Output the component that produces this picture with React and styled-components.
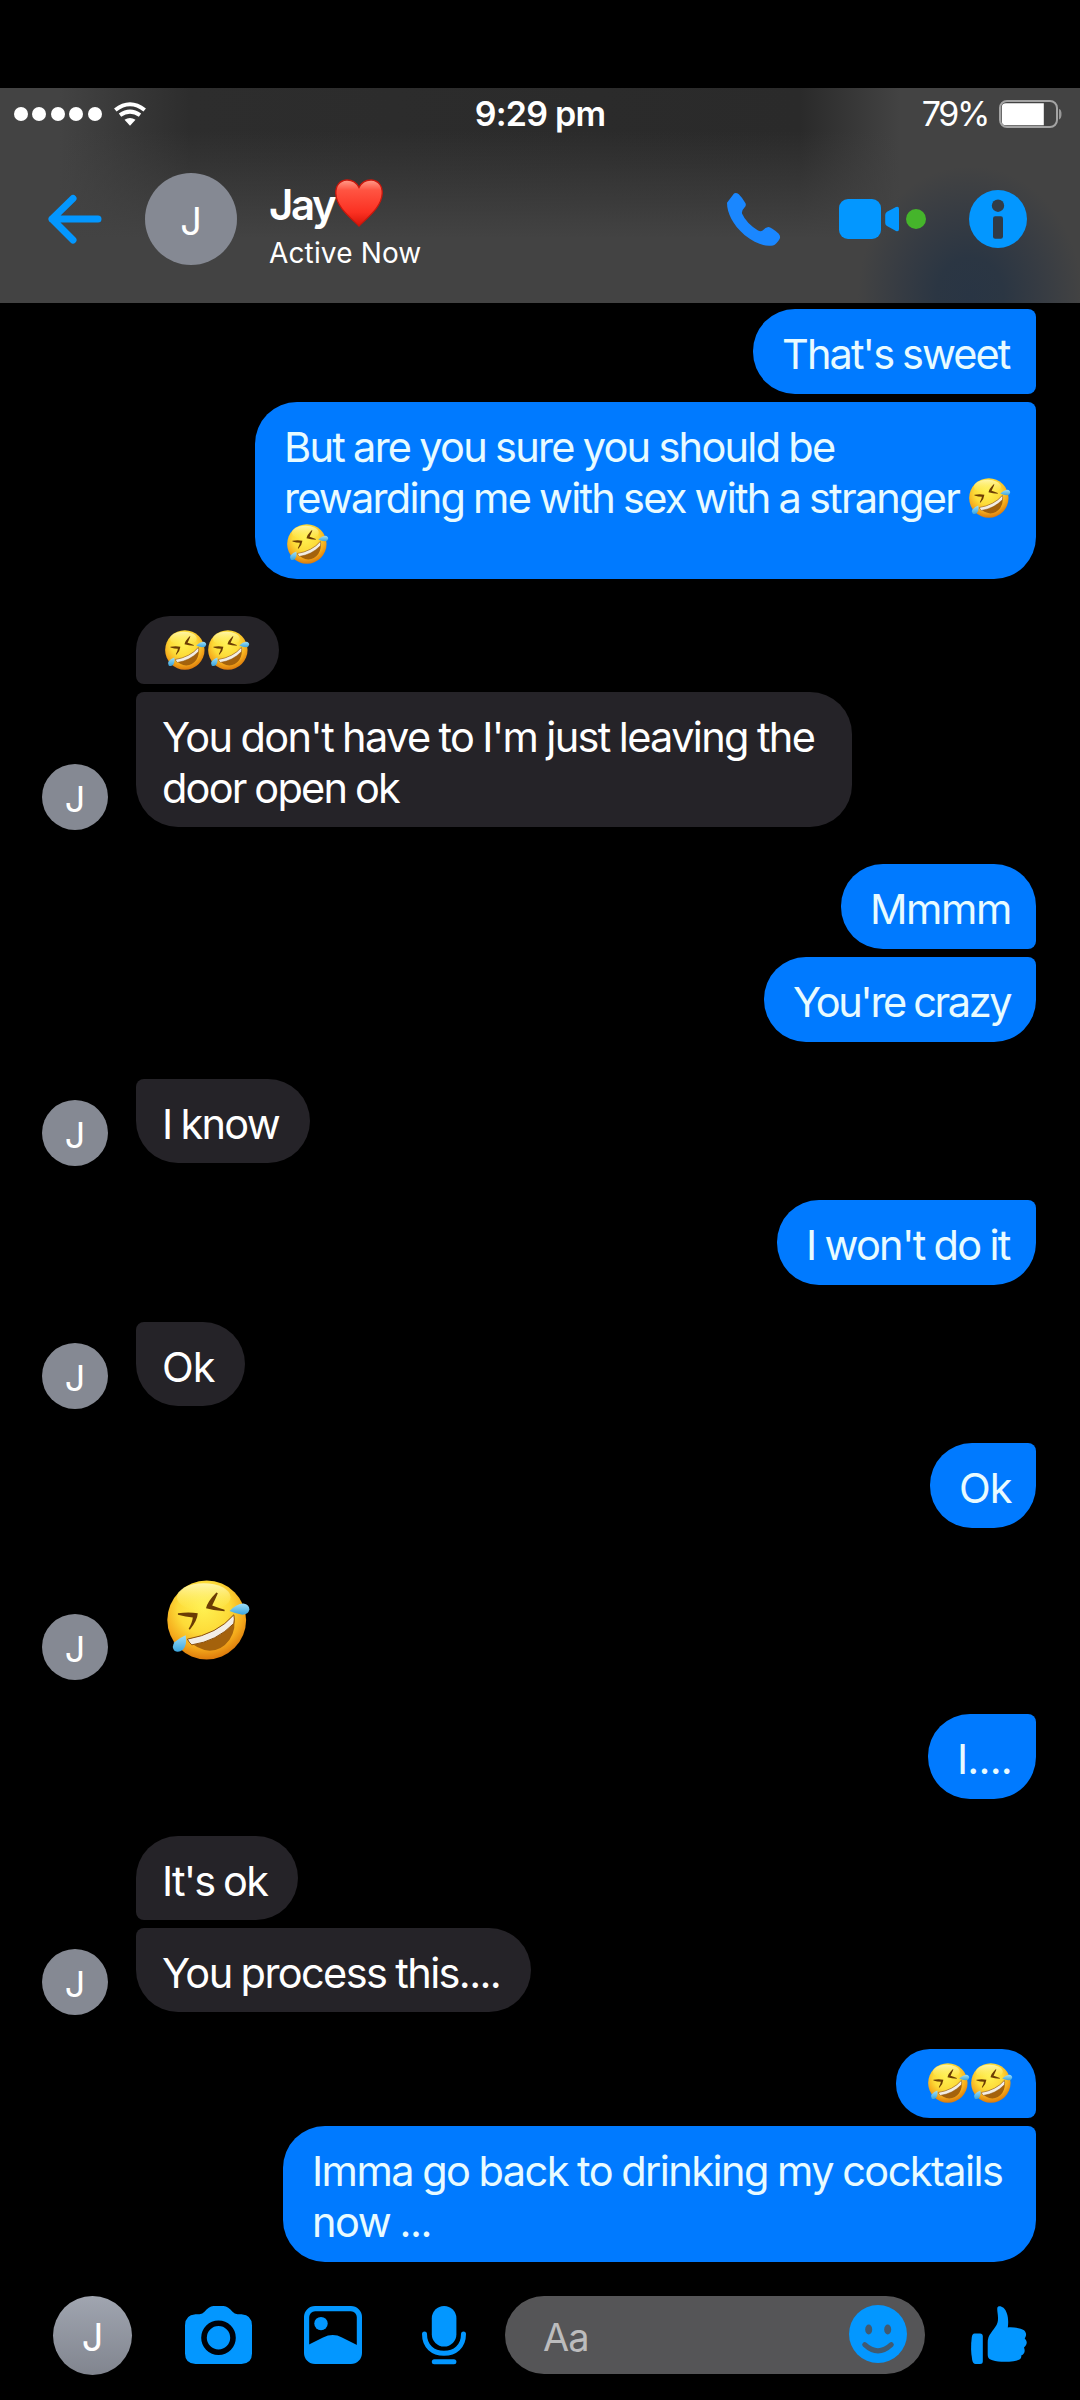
import React from "react";
import styled, { createGlobalStyle } from "styled-components";

const GlobalStyle = createGlobalStyle`
  * {
    box-sizing: border-box;
  }

  body {
    margin: 0;
    background-color: #000000;
    font-family: Inter, "Liberation Sans", sans-serif;
    color: #ffffff;
  }

  svg {
    display: block;
    flex: none;
    overflow: visible;
  }
`;

const Screen = styled.div`
  display: flex;
  flex-direction: column;
  width: 1080px;
  height: 2400px;
  padding-top: 88px;
  background-color: #000000;
  overflow: hidden;
`;

// header
const Header = styled.header`
  flex: none;
  height: 215px;
  background:
    radial-gradient(ellipse 112px 130px at 970px 208px, #293544 0%, #2b3643 30%, rgba(48, 56, 67, 0.72) 60%, rgba(67, 67, 67, 0) 100%),
    linear-gradient(to bottom, rgba(67, 67, 67, 0) 20%, #434343 70%),
    linear-gradient(to right, #434343 60px, #2d2d2d 190px, #2a2a2a 800px, #434343 900px);
`;

const StatusBar = styled.div`
  display: grid;
  grid-template-columns: 1fr auto 1fr;
  align-items: center;
  height: 51px;
  padding: 0 18px 0 14px;
`;

const Signal = styled.div`
  display: flex;
  align-items: center;
  gap: 4.4px;

  svg {
    margin-left: 8.5px;
  }
`;

const SignalDot = styled.span`
  width: 14px;
  height: 14px;
  border-radius: 50%;
  background-color: #ffffff;
`;

const Clock = styled.span`
  padding-left: 4px;
  font-size: 34px;
  font-weight: 600;
  letter-spacing: -0.75px;
  line-height: 50px;
`;

const Power = styled.div`
  display: flex;
  align-items: center;
  justify-content: flex-end;
  gap: 11px;
  font-size: 34px;
  letter-spacing: -2.4px;
  line-height: 50px;
`;

const ContactBar = styled.div`
  display: flex;
  align-items: center;
  height: 160px;
  padding: 0 53px 0 48px;
`;

const Avatar = styled.div`
  display: flex;
  flex: none;
  align-items: center;
  justify-content: center;
  width: ${({ $size }) => $size}px;
  height: ${({ $size }) => $size}px;
  padding-top: 3px;
  border-radius: 50%;
  background: ${({ $shaded }) =>
    $shaded ? "linear-gradient(#a0a5b0, #81858f)" : "#858993"};
  font-size: ${({ $font }) => $font}px;
  line-height: 1;
`;

const ContactAvatar = styled(Avatar)`
  margin-left: 43px;
`;

const ContactInfo = styled.div`
  display: flex;
  flex: 1;
  flex-direction: column;
  margin-left: 32px;
  padding-top: 13px;
`;

const ContactName = styled.div`
  display: flex;
  align-items: center;
  height: 50px;
  font-size: 42px;
  font-weight: 600;
  letter-spacing: -2.4px;
  line-height: 50px;

  svg {
    margin: -4px 0 0 1px;
  }
`;

const ContactStatus = styled.div`
  margin-top: 5px;
  font-size: 28px;
  letter-spacing: 0.15px;
  line-height: 36px;
`;

const HeaderActions = styled.div`
  display: flex;
  align-items: center;
`;

const VideoCall = styled.div`
  display: flex;
  align-items: center;
  gap: 7px;
  margin: 0 43px 0 59px;
`;

const OnlineDot = styled.span`
  width: 20px;
  height: 20px;
  border-radius: 50%;
  background-color: #45b52b;
`;

// messages
const Messages = styled.main`
  display: flex;
  flex: none;
  flex-direction: column;
  gap: 37px;
  height: 1959px;
  padding: 6px 44px 0 42px;
`;

const Group = styled.div`
  display: flex;
  align-items: flex-end;
  justify-content: ${({ $sent }) => ($sent ? "flex-end" : "flex-start")};
  gap: 28px;
`;

const GroupAvatar = styled(Avatar)`
  margin-bottom: -3px;
`;

const Bubbles = styled.div`
  display: flex;
  flex-direction: column;
  align-items: ${({ $sent }) => ($sent ? "flex-end" : "flex-start")};
  gap: 8px;
`;

const Bubble = styled.div`
  width: ${({ $width }) => $width}px;
  height: ${({ $height }) => $height}px;
  padding: ${({ $top }) => $top}px 0 0 ${({ $sent }) => ($sent ? 29 : 26)}px;
  border-radius: ${({ $corners }) => $corners};
  background-color: ${({ $sent }) => ($sent ? "#007aff" : "#252328")};
  color: ${({ $sent }) => ($sent ? "#e8fbff" : "#ffffff")};
`;

const Line = styled.div`
  display: flex;
  align-items: center;
  height: 50.8px;
  font-size: 41.5px;
  letter-spacing: ${({ $track }) => $track}px;
  word-spacing: -1px;
  line-height: 50.8px;
  white-space: pre;

  svg {
    margin-left: 1px;
  }
`;

const EmojiLine = styled.div`
  display: flex;
  gap: 2px;
  padding-left: 3px;
`;

const BigEmoji = styled.div`
  height: 112px;
  padding: 15px 0 0 31px;
`;

// composer
const Composer = styled.footer`
  display: flex;
  align-items: center;
  height: 138px;
  padding: 8px 53px 0;
`;

const ComposerIcons = styled.div`
  display: flex;
  gap: 52px;
  margin-left: 53px;

  svg:last-child {
    margin-left: 8px;
  }
`;

const Input = styled.div`
  display: flex;
  align-items: center;
  justify-content: space-between;
  width: 420px;
  height: 78px;
  margin: 0 46px 0 39px;
  padding: 0 18px 3px 38px;
  border-radius: 39px;
  background-color: #555557;
`;

const Placeholder = styled.span`
  padding-top: 7px;
  color: #bcbcbd;
  font-size: 38px;
  letter-spacing: -1px;
  line-height: 46px;
`;

const BLUE = "#0397ff";

const WifiIcon = () => (
  <svg width="32" height="24" viewBox="0 0 32 24" fill="none" stroke="#fff" strokeWidth="4">
    <path d="M1.3 8Q16-3.6 30.7 8" />
    <path d="M6 13.2Q16 6 26 13.2" />
    <path d="M10.5 17.8Q16 14 21.5 17.8L16 23.8Z" fill="#fff" stroke="none" />
  </svg>
);

const BatteryIcon = () => (
  <svg width="63" height="28" viewBox="0 0 63 28">
    <rect x="1" y="1" width="57" height="26" rx="7" fill="none" stroke="#a4a4a4" strokeWidth="2" />
    <path d="M7 3.2H44.8V25.2H7Q2.8 25.2 2.8 21V7.4Q2.8 3.2 7 3.2Z" fill="#fff" />
    <path d="M60 9Q62.5 9.5 62.5 14T60 19.5Z" fill="#989898" />
  </svg>
);

const BackIcon = () => (
  <svg width="54" height="48" viewBox="0 0 54 48" fill="none" stroke={BLUE} strokeWidth="7" strokeLinecap="round" strokeLinejoin="round">
    <path d="M25 3.5 4 24 25 45M4 24H50" />
  </svg>
);

const PhoneIcon = () => (
  <svg width="53" height="53" viewBox="0 0 53 53" fill="#1a87ff">
    <path d="M7 .4Q9.4-.5 11.8 1.3 15.8 5.3 18.5 10.2 19.5 12.5 17.5 14.5 14.5 17.5 15 20.4 19.2 30 31 37.4 33.5 38.8 35.6 37.6 38.5 34.4 41.3 34 44 33.8 51.5 40.6 54 43.2 52.6 46 49.5 51.5 46 52.4C38 54 28.5 50.5 17.5 42 6 32 0 20 0 9.8 1 4 7 .4Z" />
  </svg>
);

const VideoIcon = () => (
  <svg width="60" height="40" viewBox="0 0 60 40" fill={BLUE}>
    <rect width="42" height="40" rx="9" />
    <path d="M46.2 16Q46.2 14 48 12.8L57 8Q60 7 60 10V30Q60 33 57 32L48 27Q46.2 26 46.2 24Z" />
  </svg>
);

const InfoIcon = () => (
  <svg width="58" height="58" viewBox="0 0 58 58">
    <circle cx="29" cy="29" r="29" fill={BLUE} />
    <circle cx="29" cy="15.7" r="6.2" fill="#323c47" />
    <rect x="24" y="26.3" width="10" height="22.4" rx="2.2" fill="#303a45" />
  </svg>
);

const CameraIcon = () => (
  <svg width="67" height="58" viewBox="0 0 67 58">
    <path d="M10.5 8.3H14.5Q17.5 8.2 19.5 5.8 23.5 .5 28.5 0H38.5Q43.5 .5 47.5 5.8 49.5 8.2 52.5 8.3H56.5Q67 9 67 19.5V47.5Q67 57.5 56.5 58H10.5Q0 57.5 0 47.5V19.5Q0 9 10.5 8.3Z" fill={BLUE} />
    <circle cx="33.5" cy="31.7" r="14.5" fill={BLUE} stroke="#000208" strokeWidth="5.6" />
  </svg>
);

const GalleryIcon = () => (
  <svg width="58" height="58" viewBox="0 0 58 58">
    <rect x="2.6" y="2.6" width="52.8" height="52.8" rx="8.5" fill="none" stroke={BLUE} strokeWidth="5.2" />
    <path d="M4 39 19 31.4Q29 26.5 38 31.4L54 39.5V48Q54 55 47 55H11Q4 55 4 48Z" fill={BLUE} />
    <circle cx="17" cy="17.6" r="6.7" fill={BLUE} />
  </svg>
);

const MicIcon = () => (
  <svg width="44" height="58" viewBox="0 0 44 58">
    <rect x="9.8" width="24.6" height="40.5" rx="12.3" fill={BLUE} />
    <path d="M2.5 28C2.5 40.5 11 47.3 22 47.3S41.5 40.5 41.5 28" fill="none" stroke={BLUE} strokeWidth="5" strokeLinecap="round" />
    <rect x="9.8" y="53.2" width="24.6" height="5" rx="2.5" fill={BLUE} />
  </svg>
);

const SmileIcon = () => (
  <svg width="58" height="58" viewBox="0 0 58 58">
    <circle cx="29" cy="29" r="29" fill={BLUE} />
    <ellipse cx="19.7" cy="24.5" rx="3.5" ry="5" fill="#425a70" />
    <ellipse cx="38.7" cy="24.5" rx="3.5" ry="5" fill="#425a70" />
    <path d="M15.7 39.6Q29 52 42.3 39.6" fill="none" stroke="#425a70" strokeWidth="5" strokeLinecap="round" />
  </svg>
);

const LikeIcon = () => (
  <svg width="56" height="58" viewBox="0 0 56 58" fill={BLUE}>
    <path d="M3.5 27.6H9Q11.8 27.6 11.8 30.5V55.5Q11.8 58 9 58H4.5Q2 58 1.2 54-.8 43 .8 31 1.3 27.8 3.5 27.6Z" />
    <path d="M26.3 2C26.5-.5 30-.3 32.5 1.7 36.5 5.5 38 13 36.8 21.4 43 21 50 22 53 24.2 56 27 55.3 30 53.7 32.5 56.5 35 56.5 38.5 53 41.5 54.5 45.5 53.5 48 50.2 49.5 51 53 48 54.5 42.5 55.2 35.5 56 27 56 21.5 54.2 17.5 53 16.7 51.5 16.7 48V36.5Q16.7 30.5 20 27C24.5 20.5 27.3 18.5 27 11.5 26.9 7.5 26 5 26.3 2Z" />
  </svg>
);

const HeartEmoji = () => (
  <svg width="48" height="48" viewBox="0 0 48 48">
    <defs>
      <linearGradient id="heart" x1="0" y1="0" x2="0" y2="1">
        <stop offset="0" stopColor="#ff9d8b" />
        <stop offset="0.22" stopColor="#ff5442" />
        <stop offset="0.7" stopColor="#fb3122" />
        <stop offset="1" stopColor="#d81408" />
      </linearGradient>
    </defs>
    <path d="M24 8.5C27 2.5 32 .8 36.5 1 43.5 1.5 47.5 7 47.2 14.5 46.7 27 35.5 36 24 47 12.5 36 1.3 27 .8 14.5 .5 7 4.5 1.5 11.5 1 16 .8 21 2.5 24 8.5Z" fill="url(#heart)" stroke="#c9170c" strokeWidth="1.3" />
  </svg>
);

// 🤣 drawn on an 83x80 grid
const RoflEmoji = ({ size = 40 }) => (
  <svg width={size * 1.03} height={size} viewBox="0 0 83 80">
    <defs>
      <radialGradient id="face" cx="0.46" cy="0.34" r="0.68">
        <stop offset="0" stopColor="#fff152" />
        <stop offset="0.48" stopColor="#fddb38" />
        <stop offset="0.76" stopColor="#f5ab1c" />
        <stop offset="1" stopColor="#d9740a" />
      </radialGradient>
      <linearGradient id="shine" x1="0" y1="0" x2="0" y2="1">
        <stop offset="0" stopColor="#fff9b8" stopOpacity="0.9" />
        <stop offset="1" stopColor="#fff25a" stopOpacity="0" />
      </linearGradient>
      <linearGradient id="tear" x1="0" y1="0" x2="0" y2="1">
        <stop offset="0" stopColor="#9fdff8" />
        <stop offset="1" stopColor="#3ba5dd" />
      </linearGradient>
    </defs>
    <circle cx="40" cy="40" r="39.7" fill="url(#face)" />
    <ellipse cx="37" cy="17" rx="27" ry="14" fill="url(#shine)" />
    <path d="M11 33.3Q22 31.6 31 33.3 30.5 41 23 49.8L21.8 48.8Q25.5 42.5 26 37.5 19 37 11 34.8Z" fill="#6b3c04" />
    <path d="M49.8 12.2 51.2 13Q48.5 19.5 45.5 25.3 51 27.3 58 29.8V31.2Q48 30.8 39.3 28.2 40.5 21.5 49.8 12.2Z" fill="#6b3c04" />
    <path d="M20.5 59.5Q51 54 67 35 70.5 48 63 60 55 71 43 71 30 70 20.5 59.5Z" fill="#a4620c" />
    <path d="M20.5 59.3Q51 54 67.3 34.8 68.4 39 67.3 43.5 50 61.5 25 65 22 62.5 20.5 59.3Z" fill="#f3eee6" stroke="#8a4f0a" strokeWidth="1" />
    <path d="M63 31Q70 23.5 77 23.3 83 24 83 29.5 82 34.5 76 34.7 70 34 63 31Z" fill="url(#tear)" />
    <path d="M18.8 55.3Q20.5 65 16 70 11.5 73.5 7.5 71 4.3 67 7.5 62.5 12 58 18.8 55.3Z" fill="url(#tear)" />
  </svg>
);

// corners: top-left top-right bottom-right bottom-left
// tracks: letter spacing of each line
const CONVERSATION = [
  {
    sent: true,
    bubbles: [
      {
        width: 283,
        height: 85,
        corners: "42px 8px 8px 42px",
        lines: ["That's sweet"],
        tracks: [-1.9],
      },
      {
        width: 781,
        height: 177,
        corners: "42px 8px 42px 42px",
        lines: ["But are you sure you should be", "rewarding me with sex with a stranger "],
        tracks: [-1.72, -1.76],
        inlineEmoji: true,
        emojis: 1,
      },
    ],
  },
  {
    bubbles: [
      { width: 143, height: 68, corners: "34px 34px 34px 8px", lines: [], emojis: 2 },
      {
        width: 716,
        height: 135,
        corners: "8px 42px 42px 42px",
        lines: ["You don't have to I'm just leaving the", "door open ok"],
        tracks: [-1.65, -1.82],
      },
    ],
  },
  {
    sent: true,
    bubbles: [
      {
        width: 195,
        height: 85,
        corners: "42px 42px 8px 42px",
        lines: ["Mmmm"],
        tracks: [-1.4],
      },
      {
        width: 272,
        height: 85,
        corners: "42px 8px 42px 42px",
        lines: ["You're crazy"],
        tracks: [-2.35],
      },
    ],
  },
  {
    bubbles: [
      {
        width: 174,
        height: 84,
        corners: "8px 42px 42px 42px",
        lines: ["I know"],
        tracks: [-1.7],
      },
    ],
  },
  {
    sent: true,
    bubbles: [
      {
        width: 259,
        height: 85,
        corners: "42px 8px 42px 42px",
        lines: ["I won't do it"],
        tracks: [-1.7],
      },
    ],
  },
  {
    bubbles: [
      {
        width: 109,
        height: 84,
        corners: "8px 42px 42px 42px",
        lines: ["Ok"],
        tracks: [-1.1],
      },
    ],
  },
  {
    sent: true,
    bubbles: [
      {
        width: 106,
        height: 85,
        corners: "42px 8px 42px 42px",
        lines: ["Ok"],
        tracks: [-1.1],
      },
    ],
  },
  { bigEmoji: true, bubbles: [] },
  {
    sent: true,
    bubbles: [
      {
        width: 108,
        height: 85,
        corners: "42px 8px 42px 42px",
        lines: ["I...."],
        tracks: [-0.8],
      },
    ],
  },
  {
    bubbles: [
      {
        width: 162,
        height: 84,
        corners: "42px 42px 42px 8px",
        lines: ["It's ok"],
        tracks: [-1.85],
      },
      {
        width: 395,
        height: 84,
        corners: "8px 42px 42px 42px",
        lines: ["You process this...."],
        tracks: [-1.62],
      },
    ],
  },
  {
    sent: true,
    bubbles: [
      { width: 140, height: 69, corners: "34px 34px 8px 34px", lines: [], emojis: 2 },
      {
        width: 753,
        height: 136,
        corners: "42px 8px 42px 42px",
        lines: ["Imma go back to drinking my cocktails", "now ..."],
        tracks: [-1.54, -1.45],
      },
    ],
  },
];

function Message({ sent, message }) {
  const { width, height, corners, lines, tracks, emojis = 0, inlineEmoji } = message;
  const last = lines.length - 1;

  return (
    <Bubble
      $sent={sent}
      $width={width}
      $height={height}
      $corners={corners}
      $top={lines.length ? 20.3 : 14}
    >
      {lines.map((line, index) => (
        <Line key={line} $track={tracks[index]}>
          {line}
          {inlineEmoji && index === last && <RoflEmoji />}
        </Line>
      ))}
      {emojis > 0 && (
        <EmojiLine>
          {Array.from({ length: emojis }, (_, index) => (
            <RoflEmoji key={index} />
          ))}
        </EmojiLine>
      )}
    </Bubble>
  );
}

function App() {
  return (
    <Screen>
      <GlobalStyle />
      <Header>
        <StatusBar>
          <Signal>
            {[0, 1, 2, 3, 4].map((dot) => (
              <SignalDot key={dot} />
            ))}
            <WifiIcon />
          </Signal>
          <Clock>9:29 pm</Clock>
          <Power>
            79%
            <BatteryIcon />
          </Power>
        </StatusBar>
        <ContactBar>
          <BackIcon />
          <ContactAvatar $size={92} $font={38}>
            J
          </ContactAvatar>
          <ContactInfo>
            <ContactName>
              Jay
              <HeartEmoji />
            </ContactName>
            <ContactStatus>Active Now</ContactStatus>
          </ContactInfo>
          <HeaderActions>
            <PhoneIcon />
            <VideoCall>
              <VideoIcon />
              <OnlineDot />
            </VideoCall>
            <InfoIcon />
          </HeaderActions>
        </ContactBar>
      </Header>

      <Messages>
        {CONVERSATION.map((group, index) => (
          <Group key={index} $sent={group.sent}>
            {!group.sent && (
              <GroupAvatar $size={66} $font={36}>
                J
              </GroupAvatar>
            )}
            <Bubbles $sent={group.sent}>
              {group.bigEmoji && (
                <BigEmoji>
                  <RoflEmoji size={80} />
                </BigEmoji>
              )}
              {group.bubbles.map((message, i) => (
                <Message key={i} sent={group.sent} message={message} />
              ))}
            </Bubbles>
          </Group>
        ))}
      </Messages>

      <Composer>
        <Avatar $size={79} $font={38} $shaded>
          J
        </Avatar>
        <ComposerIcons>
          <CameraIcon />
          <GalleryIcon />
          <MicIcon />
        </ComposerIcons>
        <Input>
          <Placeholder>Aa</Placeholder>
          <SmileIcon />
        </Input>
        <LikeIcon />
      </Composer>
    </Screen>
  );
}

export default App;
